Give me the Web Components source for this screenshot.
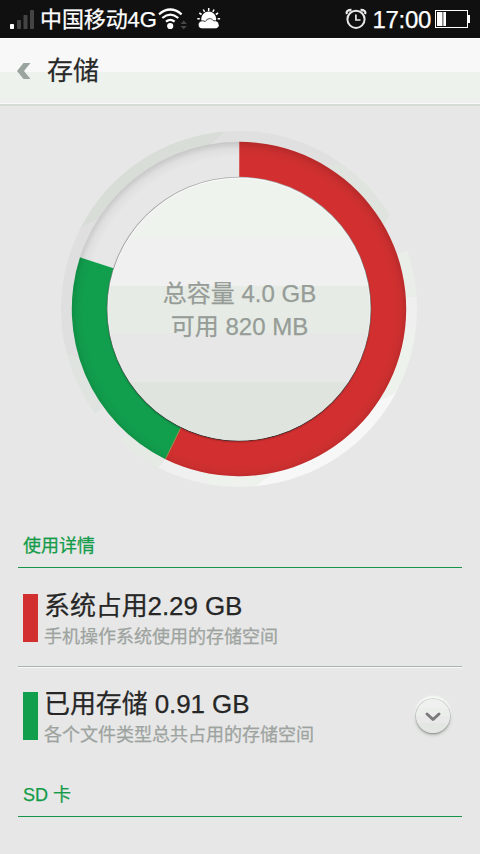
<!DOCTYPE html>
<html lang="zh-CN">
<head>
<meta charset="utf-8">
<title>存储</title>
<style>
html, body { margin: 0; height: 100%; }
body { width: 480px; height: 854px; overflow: hidden; background: #e7e7e7; font-family: "Liberation Sans", "Noto Sans CJK SC", sans-serif; -webkit-text-stroke: .25px; }
</style>
</head>
<body>
<storage-page></storage-page>
<script>
const define = (name, html, setup) => {
  const template = document.createElement('template');
  template.innerHTML = html;
  customElements.define(name, class extends HTMLElement {
    connectedCallback() {
      if (this.shadowRoot) return;
      this.attachShadow({ mode: 'open' }).append(template.content.cloneNode(true));
      if (setup) setup(this, this.shadowRoot);
    }
  });
};

define('status-bar', `
<style>
:host { display: flex; align-items: center; box-sizing: border-box; height: 38px; padding: 0 9px 0 10px; background: #101010; color: #fff; white-space: nowrap; }
svg { display: block; flex: none; }
.carrier { font-size: 22px; line-height: 38px; margin-left: 6px; padding-top: 2px; width: 117px; letter-spacing: -.1px; }
.time { font-size: 24px; line-height: 38px; margin: 0 4px 0 5px; padding-top: 1px; letter-spacing: -.3px; }
.gap { flex: 1; }
</style>
<svg width="24" height="38"><rect y="24" width="4" height="5" rx=".7" fill="#fff"/><g fill="#444"><rect x="7" y="20" width="4" height="9" rx=".7"/><rect x="13.500" y="15" width="4" height="14" rx=".7"/><rect x="20" y="10" width="4" height="19" rx=".7"/></g></svg>
<span class="carrier">中国移动4G</span>
<svg width="70" height="38" viewBox="157 0 70 38">
  <g fill="none" stroke="#fff" stroke-width="2.200"><path d="M159 14.300Q170.300 4.700 181.600 14.300"/><path d="M162.300 18Q170.300 11.300 178.300 18"/><path d="M166 21.700Q170.300 18 174.600 21.700"/></g>
  <circle cx="170.200" cy="26" r="3.100" fill="#fff"/>
  <path d="M180.500 24l3.200-3.500 3.200 3.500zM180.500 26l3.200 3.300 3.200-3.300z" fill="#484848"/>
  <g stroke="#fff" stroke-width="1.500"><path d="M208.700 8v3M203.300 9.500l1.300 2.400M214.100 9.500l-1.300 2.400M199.300 13l2.300 1.500M218.100 13l-2.300 1.500M197.300 18.700h2.500M217.600 18.700h2.500"/></g>
  <circle cx="208.700" cy="19" r="7.500" fill="#fff"/>
  <path d="M202 28.500c-5-.3-5-7.500.2-7.700 1.300-.1 2.400.3 3 .8 2-3.300 6-4.200 8.300-.8 3.500-.7 5.500 1.500 5.500 3.800 0 2.500-1.500 3.900-4 3.900z" fill="#fff" stroke="#101010" stroke-width=".8"/>
  <path d="M202 28.300q-3.200-.5-3.200-3.300H219q-.5 3-4 3.300z" fill="#fff"/>
</svg>
<span class="gap"></span>
<svg width="22" height="38" viewBox="343 0 22 38" fill="none" stroke="#e8e8e8"><circle cx="354" cy="19.300" r="8.600" stroke-width="2"/><path d="M353.900 14.500v5.500h4.600" stroke-width="1.700"/><path d="M345 14q-1.500-4 4.500-4M363 14q1.500-4-4.500-4" stroke-width="2.300"/></svg>
<span class="time">17:00</span>
<svg width="36" height="38" viewBox="435 0 36 38"><rect x="435.500" y="10.500" width="32" height="17" fill="none" stroke="#fff"/><path d="M437 12h5.500v14H437zM443.300 12h2.700v14h-2.700zM468 15h2v8h-2z" fill="#fff"/></svg>
`);

define('title-bar', `
<style>
:host { display: flex; align-items: center; box-sizing: border-box; height: 68px; padding: 0 17px; gap: 16px; background: linear-gradient(#fff 0 1px, #f8f8f8 1px 34px, #eef2ed 34px 60px, #efefef 60px 65px, #fafafa 65px 66px, #d5dcd5 66px 68px); }
h1 { margin: 0; font-size: 26px; line-height: 36px; font-weight: 400; color: #282828; padding-bottom: 2px; }
svg { display: block; }
</style>
<svg width="14" height="68"><path d="M0 33L6.500 25H13.500L7 33L13.500 41H6.500Z" fill="#9ba5a0"/></svg>
<h1><slot></slot></h1>
`);

define('usage-ring', `
<style>
:host { display: grid; width: 360px; height: 360px; place-items: center; }
svg, .label { grid-area: 1 / 1; }
svg { display: block; }
.label { z-index: 1; text-align: center; color: #969c97; font-size: 24px; line-height: 33px; white-space: nowrap; padding-top: 1px; padding-left: 1px; }
</style>
<svg width="360" height="360" viewBox="59 129 360 360">
  <defs>
    <linearGradient id="face" gradientUnits="userSpaceOnUse" x1="0" y1="177" x2="0" y2="441"></linearGradient>
    <radialGradient id="rim" gradientUnits="userSpaceOnUse" cx="239" cy="311" r="169">
      <stop offset=".91" stop-color="#000" stop-opacity="0"/><stop offset=".96" stop-color="#000" stop-opacity=".035"/><stop offset="1" stop-color="#000" stop-opacity=".14"/>
    </radialGradient>
    <linearGradient id="edge" x1="0" y1="0" x2="0" y2="1"><stop offset="0" stop-color="#aaa"/><stop offset=".45" stop-color="#888"/><stop offset="1" stop-color="#333"/></linearGradient>
    <filter id="soft" x="-10%" y="-10%" width="120%" height="120%"><feGaussianBlur stdDeviation="1.200"/></filter>
  </defs>
  <g id="bevel"></g>
  <circle cx="239" cy="309" r="167.200" fill="#e7e7e7"/>
  <g id="parts"></g>
  <circle cx="239" cy="309" r="167.200" fill="url(#rim)"/>
  <circle cx="239" cy="310" r="131.500" fill="#000" opacity=".45" filter="url(#soft)"/>
  <circle cx="239" cy="309" r="132.200" fill="url(#edge)"/>
  <circle cx="239" cy="309" r="131.500" fill="#fafafa"/>
  <circle cx="239" cy="309.500" r="131" fill="url(#face)"/>
</svg>
<div class="label"><slot></slot></div>
`, (host, root) => {
  const cx = 239, cy = 309;
  const point = (r, a) => [cx + r * Math.sin(a * Math.PI / 180), cy - r * Math.cos(a * Math.PI / 180)].map(v => v.toFixed(2)).join(' ');
  const wedge = (r, a, b, fill, innerA = a, innerB = b) => `<path d="M${cx} ${cy}L${point(166, innerA)}L${point(r, a)}A${r} ${r} 0 ${b - a > 180 ? 1 : 0} 1 ${point(r, b)}L${point(166, innerB)}Z" fill="${fill}"/>`;
  // outer start, outer end, colour, then the start and end on the inner edge where the facet is slanted
  root.querySelector('#bevel').innerHTML = [
    [-63, -4.5, '#d8ddd7', -57, -10], [-4.5, 35, '#e0e0e0', -10, 31], [35, 58, '#dfe4df', 31, 60], [71, 86, '#eaeee9'], [86, 96, '#efefef'],
    [96, 118, '#edf2ed', 96, 124], [118, 175, '#f7f7f7', 124, 167], [175, 190, '#edf2ec', 167, 194], [190, 207, '#f0f0f0', 194, 206], [207, 222, '#e6eae5'],
    [234, 256, '#e0e4e0', 234, 252], [256, 297, '#dfdfe0', 252, 303]
  ].map(s => wedge(178, ...s)).join('');
  const total = +host.getAttribute('total');
  const red = host.getAttribute('system') / total * 360;
  const green = red + host.getAttribute('used') / total * 360;
  root.querySelector('#parts').innerHTML = wedge(167.2, 0.1, red, '#d23030') + wedge(167.2, red, green, '#119f4d')
    + `<path d="M${cx} ${cy}L${point(167, red)}" stroke="#9a8a48" stroke-width="1"/>`;
  root.querySelector('#face').innerHTML = [[177, 237, '#eef3ed'], [237, 286, '#f0f0f0'], [286, 333, '#e6ebe5'], [333, 382, '#e7e7e7'], [382, 441, '#dfe4de']]
    .map(([a, b, c]) => `<stop offset="${(a - 177) / 264}" stop-color="${c}"/><stop offset="${(b - 177) / 264}" stop-color="${c}"/>`).join('');
});

define('section-heading', `
<style>
:host { display: block; box-sizing: border-box; height: 43px; margin: 0 18px; padding-left: 5px; border-bottom: 1px solid #169447; color: #139b47; font-size: 18px; line-height: 43px; }
</style><slot></slot>
`);

define('usage-row', `
<style>
:host { display: flex; box-sizing: border-box; height: 98px; margin: 0 18px; padding: 26px 10px 0 5px; }
.swatch { width: 15px; height: 48px; background: var(--swatch); flex: none; }
.text { flex: 1; margin-left: 6px; white-space: nowrap; }
.name { font-size: 26px; line-height: 30px; color: #262626; margin-top: -3px; letter-spacing: -.1px; }
.note { font-size: 18px; line-height: 24px; color: #9da39f; margin-top: 4px; }
:host([divided]) { height: 99px; border-bottom: 1px solid #a9b3ae; box-shadow: 0 1px #f8f8f8; }
:host(:not([divided])) { padding-top: 25px; }
</style>
<div class="swatch"></div>
<div class="text"><div class="name"><slot name="name"></slot></div><div class="note"><slot></slot></div></div>
<slot name="action"></slot>
`);

define('expand-button', `
<style>
:host { display: grid; place-items: center; width: 34px; height: 34px; border-radius: 50%; margin-top: 7px; margin-right: 2px; background: linear-gradient(#f0f0f0 0 25%, #ebeeea 25% 50%, #e9e9e9 50% 72%, #e3e6e2 72%); box-shadow: 0 0 0 .6px #b5bab6, 0 1px 1.500px #777, 0 -2px 2px 1px #f7faf6, 0 2px 3px 1px #ccd1cc; }
svg { display: block; }
</style>
<svg width="18" height="12"><path d="M3 4L9 9.500L15 4" fill="none" stroke="#7a7a7a" stroke-width="3" stroke-linecap="round" stroke-linejoin="round"/></svg>
`);

define('storage-page', `
<style>
:host { display: flex; flex-direction: column; height: 854px; }
usage-ring { margin: 23px 0 0 59px; }
.details { margin-top: 36px; }
.red { --swatch: #d23030; }
.green { --swatch: #119f4d; }
.sd { margin-top: 9px; }
</style>
<status-bar></status-bar>
<title-bar>存储</title-bar>
<usage-ring total="4" system="2.29" used="0.91"><div>总容量 4.0 GB</div><div>可用 820 MB</div></usage-ring>
<section-heading class="details">使用详情</section-heading>
<usage-row class="red" divided><span slot="name">系统占用2.29 GB</span>手机操作系统使用的存储空间</usage-row>
<usage-row class="green"><span slot="name">已用存储 0.91 GB</span>各个文件类型总共占用的存储空间<expand-button slot="action"></expand-button></usage-row>
<section-heading class="sd">SD 卡</section-heading>
`);
</script>
</body>
</html>
